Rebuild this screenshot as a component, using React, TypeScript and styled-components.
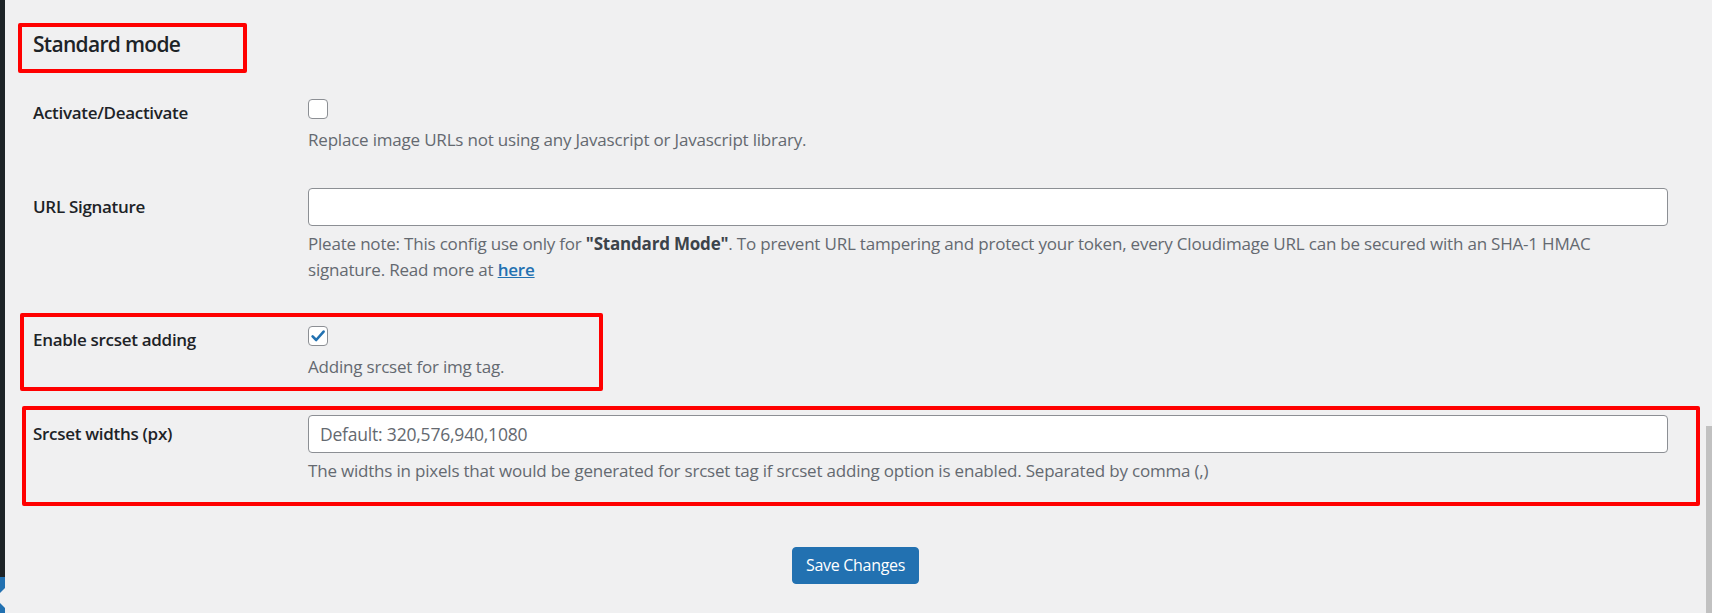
import styled, { createGlobalStyle } from "styled-components";

const GlobalStyle = createGlobalStyle`
  html, body {
    margin: 0;
    padding: 0;
    background: #f0f0f1;
  }
  body {
    font-family: "Open Sans", "Noto Sans", Arial, sans-serif;
    color: #1d2327;
  }
  * {
    box-sizing: border-box;
  }
`;

const Shell = styled.div`
  display: flex;
  height: 613px;
  overflow: hidden;
`;

const AdminMenu = styled.div`
  width: 5px;
  flex-shrink: 0;
  display: flex;
  flex-direction: column;
  background: #1d2327;
  overflow: hidden;
`;

const MenuSpacer = styled.div`
  flex: 1;
`;

const MenuCurrent = styled.div`
  position: relative;
  height: 36px;
  background: #2271b1;
  &::after {
    content: "";
    position: absolute;
    right: 0;
    top: 11px;
    border: 10px solid transparent;
    border-right-color: #f0f0f1;
  }
`;

const Main = styled.main`
  flex: 1;
  min-width: 0;
  padding-top: 29px;
`;

const Wrap = styled.div`
  padding: 0 38px 0 28px;
`;

const ScrollTrack = styled.div`
  width: 6px;
  flex-shrink: 0;
  display: flex;
  flex-direction: column;
  padding-top: 426px;
`;

const ScrollThumb = styled.div`
  flex: 1;
  background: #c1c1c1;
`;

const SectionTitle = styled.h2`
  position: relative;
  margin: 0 0 17px;
  font-size: 21px;
  line-height: 30px;
  letter-spacing: -0.7px;
  font-weight: 600;
  color: #1d2327;
`;

const Marker = styled.span<{ $left: number; $top: number; $width: number; $height: number }>`
  position: absolute;
  left: ${(p) => p.$left}px;
  top: ${(p) => p.$top}px;
  width: ${(p) => p.$width}px;
  height: ${(p) => p.$height}px;
  border: 4px solid #ff0000;
  border-radius: 2px;
  pointer-events: none;
`;

const Row = styled.div`
  position: relative;
  display: grid;
  grid-template-columns: 275px 1fr;
`;

const Label = styled.div`
  padding-top: 25px;
  font-size: 17px;
  line-height: 23px;
  letter-spacing: -0.3px;
  font-weight: 600;
  color: #1d2327;
`;

const Field = styled.div<{ $bottom: number }>`
  padding: 18px 0 ${(p) => p.$bottom}px;
`;

const Checkbox = styled.span`
  display: flex;
  align-items: center;
  justify-content: center;
  width: 20px;
  height: 20px;
  margin-top: 5px;
  border: 1px solid #8c8f94;
  border-radius: 4px;
  background: #fff;
`;

const TextInput = styled.input`
  display: block;
  width: 100%;
  height: 38px;
  margin: 0;
  padding: 0 11px;
  border: 1px solid #8c8f94;
  border-radius: 4px;
  background: #fff;
  font-family: inherit;
  font-size: 17.5px;
  letter-spacing: -0.2px;
  color: #2c3338;
  outline: none;
  &::placeholder {
    color: #646970;
    opacity: 1;
  }
`;

const Description = styled.p<{ $gap: number }>`
  margin: ${(p) => p.$gap}px 0 0;
  font-size: 17px;
  line-height: 26px;
  letter-spacing: -0.2px;
  color: #646970;
  strong {
    font-weight: 700;
    color: #3c434a;
  }
  a {
    font-weight: 600;
    color: #2271b1;
    text-decoration: underline;
  }
`;

const SubmitBar = styled.div`
  margin-top: 44px;
  text-align: center;
`;

const PrimaryButton = styled.button`
  height: 37px;
  padding: 0 13px;
  background: #2271b1;
  border: 1px solid #2271b1;
  border-radius: 4px;
  color: #fff;
  font-family: inherit;
  font-size: 16px;
  letter-spacing: -0.3px;
  line-height: 35px;
  cursor: pointer;
`;

const CheckMark = () => (
  <svg width="16" height="16" viewBox="0 0 16 16" aria-hidden="true">
    <path
      d="M2.6 8.4 L6.2 12 L13.6 3.6"
      fill="none"
      stroke="#2271b1"
      strokeWidth="2.6"
      strokeLinecap="round"
      strokeLinejoin="round"
    />
  </svg>
);

export default function App() {
  return (
    <>
      <GlobalStyle />
      <Shell>
        <AdminMenu>
          <MenuSpacer />
          <MenuCurrent />
        </AdminMenu>
        <Main>
          <Wrap>
            <SectionTitle>
              Standard mode
              <Marker $left={-15} $top={-6} $width={229} $height={50} />
            </SectionTitle>

            <Row>
              <Label>Activate/Deactivate</Label>
              <Field $bottom={17}>
                <Checkbox />
                <Description $gap={8}>
                  Replace image URLs not using any Javascript or Javascript library.
                </Description>
              </Field>
            </Row>

            <Row>
              <Label>URL Signature</Label>
              <Field $bottom={20}>
                <TextInput type="text" />
                <Description $gap={5}>
                  Pleate note: This config use only for <strong>"Standard Mode"</strong>. To prevent URL
                  tampering and protect your token, every Cloudimage URL can be secured with an SHA-1
                  HMAC signature. Read more at <a href="#">here</a>
                </Description>
              </Field>
            </Row>

            <Row>
              <Label>Enable srcset adding</Label>
              <Field $bottom={17}>
                <Checkbox>
                  <CheckMark />
                </Checkbox>
                <Description $gap={8}>Adding srcset for img tag.</Description>
              </Field>
              <Marker $left={-13} $top={10} $width={583} $height={78} />
            </Row>

            <Row>
              <Label>Srcset widths (px)</Label>
              <Field $bottom={19}>
                <TextInput type="text" placeholder="Default: 320,576,940,1080" />
                <Description $gap={5}>
                  The widths in pixels that would be generated for srcset tag if srcset adding option
                  is enabled. Separated by comma (,)
                </Description>
              </Field>
              <Marker $left={-11} $top={9} $width={1678} $height={100} />
            </Row>
          </Wrap>

          <SubmitBar>
            <PrimaryButton type="button">Save Changes</PrimaryButton>
          </SubmitBar>
        </Main>
        <ScrollTrack>
          <ScrollThumb />
        </ScrollTrack>
      </Shell>
    </>
  );
}
